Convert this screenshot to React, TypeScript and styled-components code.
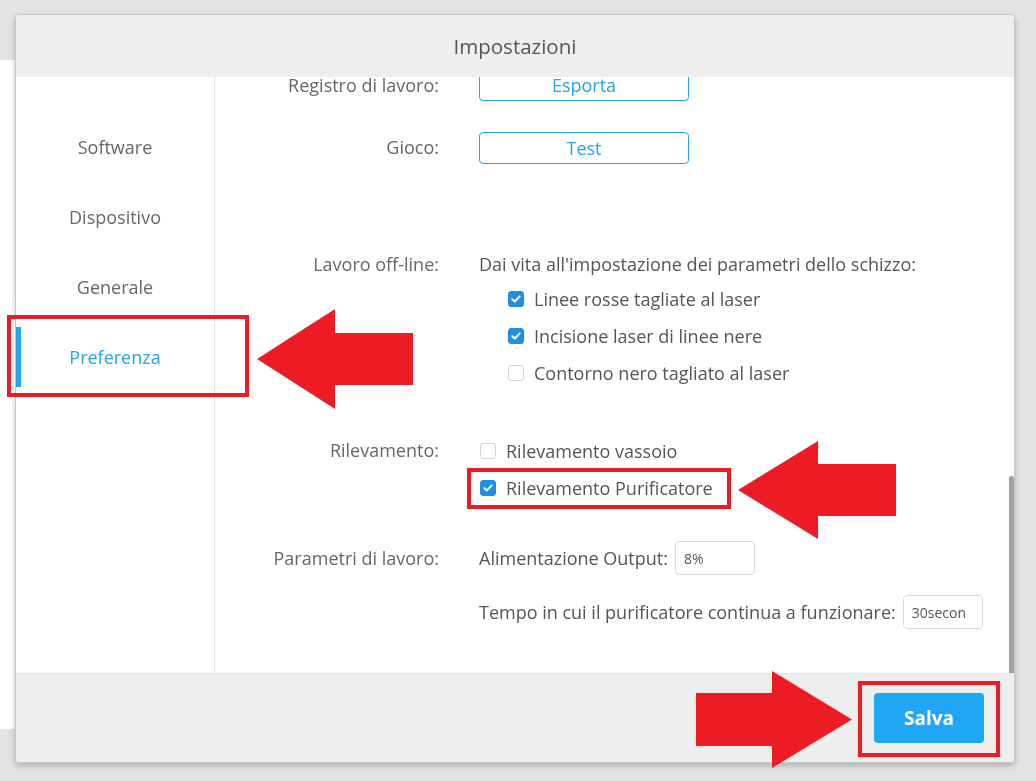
import { useLayoutEffect, useRef, useState } from "react";
import styled, { createGlobalStyle } from "styled-components";

const BLUE = "#25a2ec";
const MARK = "#ed1c24";

const GlobalStyle = createGlobalStyle`
  html, body {
    margin: 0;
    padding: 0;
    background: #e3e3e3;
    font-family: "Open Sans", "Noto Sans", sans-serif;
  }
`;

/* app behind the modal */
const Page = styled.div`
  width: 1036px;
  height: 781px;
  display: grid;
  grid-template-rows: 60px 669px 1fr;
  background: #e3e3e3;
`;

const Workspace = styled.div`
  grid-row: 2;
  width: 640px;
  background: #fff;
`;

const Dialog = styled.div`
  position: fixed;
  left: 15px;
  top: 14px;
  width: 1000px;
  height: 749px;
  box-sizing: border-box;
  border: 1px solid #c6c6c6;
  border-radius: 4px;
  box-shadow: 0 3px 6px rgba(0, 0, 0, 0.22);
  display: grid;
  grid-template-rows: 62px 596px 1fr;
  overflow: hidden;
  background: #fff;
`;

const Header = styled.div`
  background: #eeeeee;
  display: flex;
  align-items: center;
  justify-content: center;
  font-size: 20.5px;
  color: #555;
  padding-bottom: 1px;
`;

const Body = styled.div`
  display: grid;
  grid-template-columns: 199px 1fr;
  min-height: 0;
`;

const Sidebar = styled.nav`
  border-right: 1px solid #e2e2e2;
  display: flex;
  flex-direction: column;
  gap: 10px;
  padding-top: 40px;
`;

const NavItem = styled.div<{ $active?: boolean }>`
  height: 60px;
  display: flex;
  align-items: center;
  justify-content: center;
  font-size: 18px;
  color: ${({ $active }) => ($active ? BLUE : "#666")};
  border-left: 5px solid ${({ $active }) => ($active ? BLUE : "transparent")};
  padding-right: 5px;
`;

const ContentPane = styled.div`
  position: relative;
  min-height: 0;
  display: grid;
`;

const Scroller = styled.div`
  overflow-y: scroll;
  min-height: 0;
  scrollbar-width: none;

  &::-webkit-scrollbar {
    display: none;
  }
`;

const ScrollThumb = styled.div`
  position: absolute;
  right: 0;
  width: 5px;
  background: #a2a2a2;
  border-radius: 2px 2px 0 0;
`;

// groups further up the list, scrolled out of view
const EarlierGroups = styled.div`
  height: 1199px;
`;

const Form = styled.div`
  display: flex;
  flex-direction: column;
  padding-bottom: 44px;
`;

const Row = styled.div<{ $space: number }>`
  display: grid;
  grid-template-columns: 224px 1fr;
  column-gap: 40px;
  margin-top: ${({ $space }) => $space}px;
`;

const Label = styled.div<{ $lh: number }>`
  text-align: right;
  font-size: 18px;
  color: #666;
  line-height: ${({ $lh }) => $lh}px;
  white-space: nowrap;
`;

const Controls = styled.div<{ $gap?: number }>`
  display: flex;
  flex-direction: column;
  align-items: flex-start;
  gap: ${({ $gap }) => $gap ?? 0}px;
`;

const OutlineButton = styled.button`
  width: 210px;
  height: 32px;
  border: 1px solid ${BLUE};
  border-radius: 4px;
  background: #fff;
  color: ${BLUE};
  font-family: inherit;
  font-size: 18px;
  padding: 0;
  padding-bottom: 1px;
`;

const Description = styled.div`
  font-size: 18px;
  color: #555;
  line-height: 31px;
  white-space: nowrap;
`;

const CheckRow = styled.label<{ $indent: number }>`
  height: 37px;
  display: flex;
  align-items: center;
  gap: 10px;
  padding-left: ${({ $indent }) => $indent}px;
  font-size: 18px;
  color: #555;
  white-space: nowrap;
`;

const Box = styled.span<{ $on: boolean }>`
  width: 16px;
  height: 16px;
  box-sizing: border-box;
  border-radius: 3px;
  border: 1px solid ${({ $on }) => ($on ? "#1f8fe4" : "#d4d4d4")};
  background: ${({ $on }) => ($on ? "#1f8fe4" : "#fff")};
  display: flex;
  align-items: center;
  justify-content: center;
  flex-shrink: 0;
`;

const FieldRow = styled.div`
  height: 34px;
  display: flex;
  align-items: center;
  gap: 7px;
  font-size: 18px;
  color: #555;
  white-space: nowrap;
`;

const NumberField = styled.input`
  width: 80px;
  height: 34px;
  box-sizing: border-box;
  border: 1px solid #d9d9d9;
  border-radius: 4px;
  padding: 0 10px 0 8px;
  font-family: inherit;
  font-size: 14px;
  color: #555;
  outline: none;
  flex-shrink: 0;
`;

const Footer = styled.div`
  background: #eeeeee;
  border-top: 1px solid #e4e4e4;
  display: flex;
  align-items: center;
  justify-content: flex-end;
  padding-right: 30px;
`;

const PrimaryButton = styled.button`
  width: 110px;
  height: 50px;
  border: none;
  border-radius: 4px;
  background: #1fa6f4;
  color: #fff;
  font-family: inherit;
  font-size: 19px;
  font-weight: 700;
`;

/* red call-outs on top of everything */
const Callouts = styled.div`
  position: fixed;
  inset: 0;
  pointer-events: none;
`;

const Frame = styled.div`
  position: absolute;
  box-sizing: border-box;
  border: 4px solid ${MARK};
`;

const ArrowSvg = styled.svg`
  position: absolute;
`;

function Check({ on }: { on: boolean }) {
  return (
    <Box $on={on}>
      {on && (
        <svg width="10" height="8" viewBox="0 0 10 8">
          <polyline
            points="1.3,4.2 3.8,6.5 8.7,1.4"
            fill="none"
            stroke="#fff"
            strokeWidth="2"
            strokeLinecap="round"
            strokeLinejoin="round"
          />
        </svg>
      )}
    </Box>
  );
}

interface ArrowProps {
  x: number;
  y: number;
  w: number;
  h: number;
  head: number;
  shaft: number;
  dir: "left" | "right";
}

function Arrow({ x, y, w, h, head, shaft, dir }: ArrowProps) {
  const mid = h / 2;
  const s0 = mid - shaft / 2;
  const s1 = mid + shaft / 2;
  const pts =
    dir === "left"
      ? [
          [0, mid],
          [head, 0],
          [head, s0],
          [w, s0],
          [w, s1],
          [head, s1],
          [head, h],
        ]
      : [
          [w, mid],
          [w - head, 0],
          [w - head, s0],
          [0, s0],
          [0, s1],
          [w - head, s1],
          [w - head, h],
        ];
  return (
    <ArrowSvg
      style={{ left: x, top: y }}
      width={w}
      height={h}
      viewBox={`0 0 ${w} ${h}`}
    >
      <polygon points={pts.map((p) => p.join(",")).join(" ")} fill={MARK} />
    </ArrowSvg>
  );
}

const NAV = ["Software", "Dispositivo", "Generale", "Preferenza"];

export default function App() {
  const scroller = useRef<HTMLDivElement>(null);
  const [thumb, setThumb] = useState({ top: 0, height: 0 });

  useLayoutEffect(() => {
    const el = scroller.current;
    if (!el) return;
    el.scrollTop = el.scrollHeight;
    const view = el.clientHeight;
    const total = el.scrollHeight;
    setThumb({
      top: (el.scrollTop / total) * view,
      height: (view * view) / total,
    });
  }, []);

  return (
    <>
      <GlobalStyle />
      <Page>
        <Workspace />
      </Page>

      <Dialog>
        <Header>Impostazioni</Header>
        <Body>
          <Sidebar>
            {NAV.map((name) => (
              <NavItem key={name} $active={name === "Preferenza"}>
                {name}
              </NavItem>
            ))}
          </Sidebar>

          <ContentPane>
            <Scroller ref={scroller}>
              <EarlierGroups />
              <Form>
                <Row $space={0}>
                  <Label $lh={32}>Registro di lavoro:</Label>
                  <Controls>
                    <OutlineButton>Esporta</OutlineButton>
                  </Controls>
                </Row>

                <Row $space={31}>
                  <Label $lh={30}>Gioco:</Label>
                  <Controls>
                    <OutlineButton>Test</OutlineButton>
                  </Controls>
                </Row>

                <Row $space={85}>
                  <Label $lh={31}>Lavoro off-line:</Label>
                  <Controls>
                    <Description>
                      Dai vita all'impostazione dei parametri dello schizzo:
                    </Description>
                    <CheckRow $indent={29}>
                      <Check on />
                      Linee rosse tagliate al laser
                    </CheckRow>
                    <CheckRow $indent={29}>
                      <Check on />
                      Incisione laser di linee nere
                    </CheckRow>
                    <CheckRow $indent={29}>
                      <Check on={false} />
                      Contorno nero tagliato al laser
                    </CheckRow>
                  </Controls>
                </Row>

                <Row $space={41}>
                  <Label $lh={37}>Rilevamento:</Label>
                  <Controls>
                    <CheckRow $indent={1}>
                      <Check on={false} />
                      Rilevamento vassoio
                    </CheckRow>
                    <CheckRow $indent={1}>
                      <Check on />
                      Rilevamento Purificatore
                    </CheckRow>
                  </Controls>
                </Row>

                <Row $space={35}>
                  <Label $lh={34}>Parametri di lavoro:</Label>
                  <Controls $gap={20}>
                    <FieldRow>
                      Alimentazione Output:
                      <NumberField readOnly value="8%" />
                    </FieldRow>
                    <FieldRow>
                      Tempo in cui il purificatore continua a funzionare:
                      <NumberField readOnly value="30secon" />
                    </FieldRow>
                  </Controls>
                </Row>
              </Form>
            </Scroller>
            <ScrollThumb style={{ top: thumb.top, height: thumb.height }} />
          </ContentPane>
        </Body>
        <Footer>
          <PrimaryButton>Salva</PrimaryButton>
        </Footer>
      </Dialog>

      <Callouts>
        <Frame style={{ left: 7, top: 315, width: 242, height: 82 }} />
        <Frame style={{ left: 467, top: 468, width: 264, height: 41 }} />
        <Frame style={{ left: 858, top: 681, width: 142, height: 76 }} />
        <Arrow x={257} y={309} w={156} h={100} head={78} shaft={52} dir="left" />
        <Arrow x={738} y={441} w={158} h={98} head={80} shaft={52} dir="left" />
        <Arrow x={696} y={671} w={156} h={97} head={80} shaft={53} dir="right" />
      </Callouts>
    </>
  );
}
